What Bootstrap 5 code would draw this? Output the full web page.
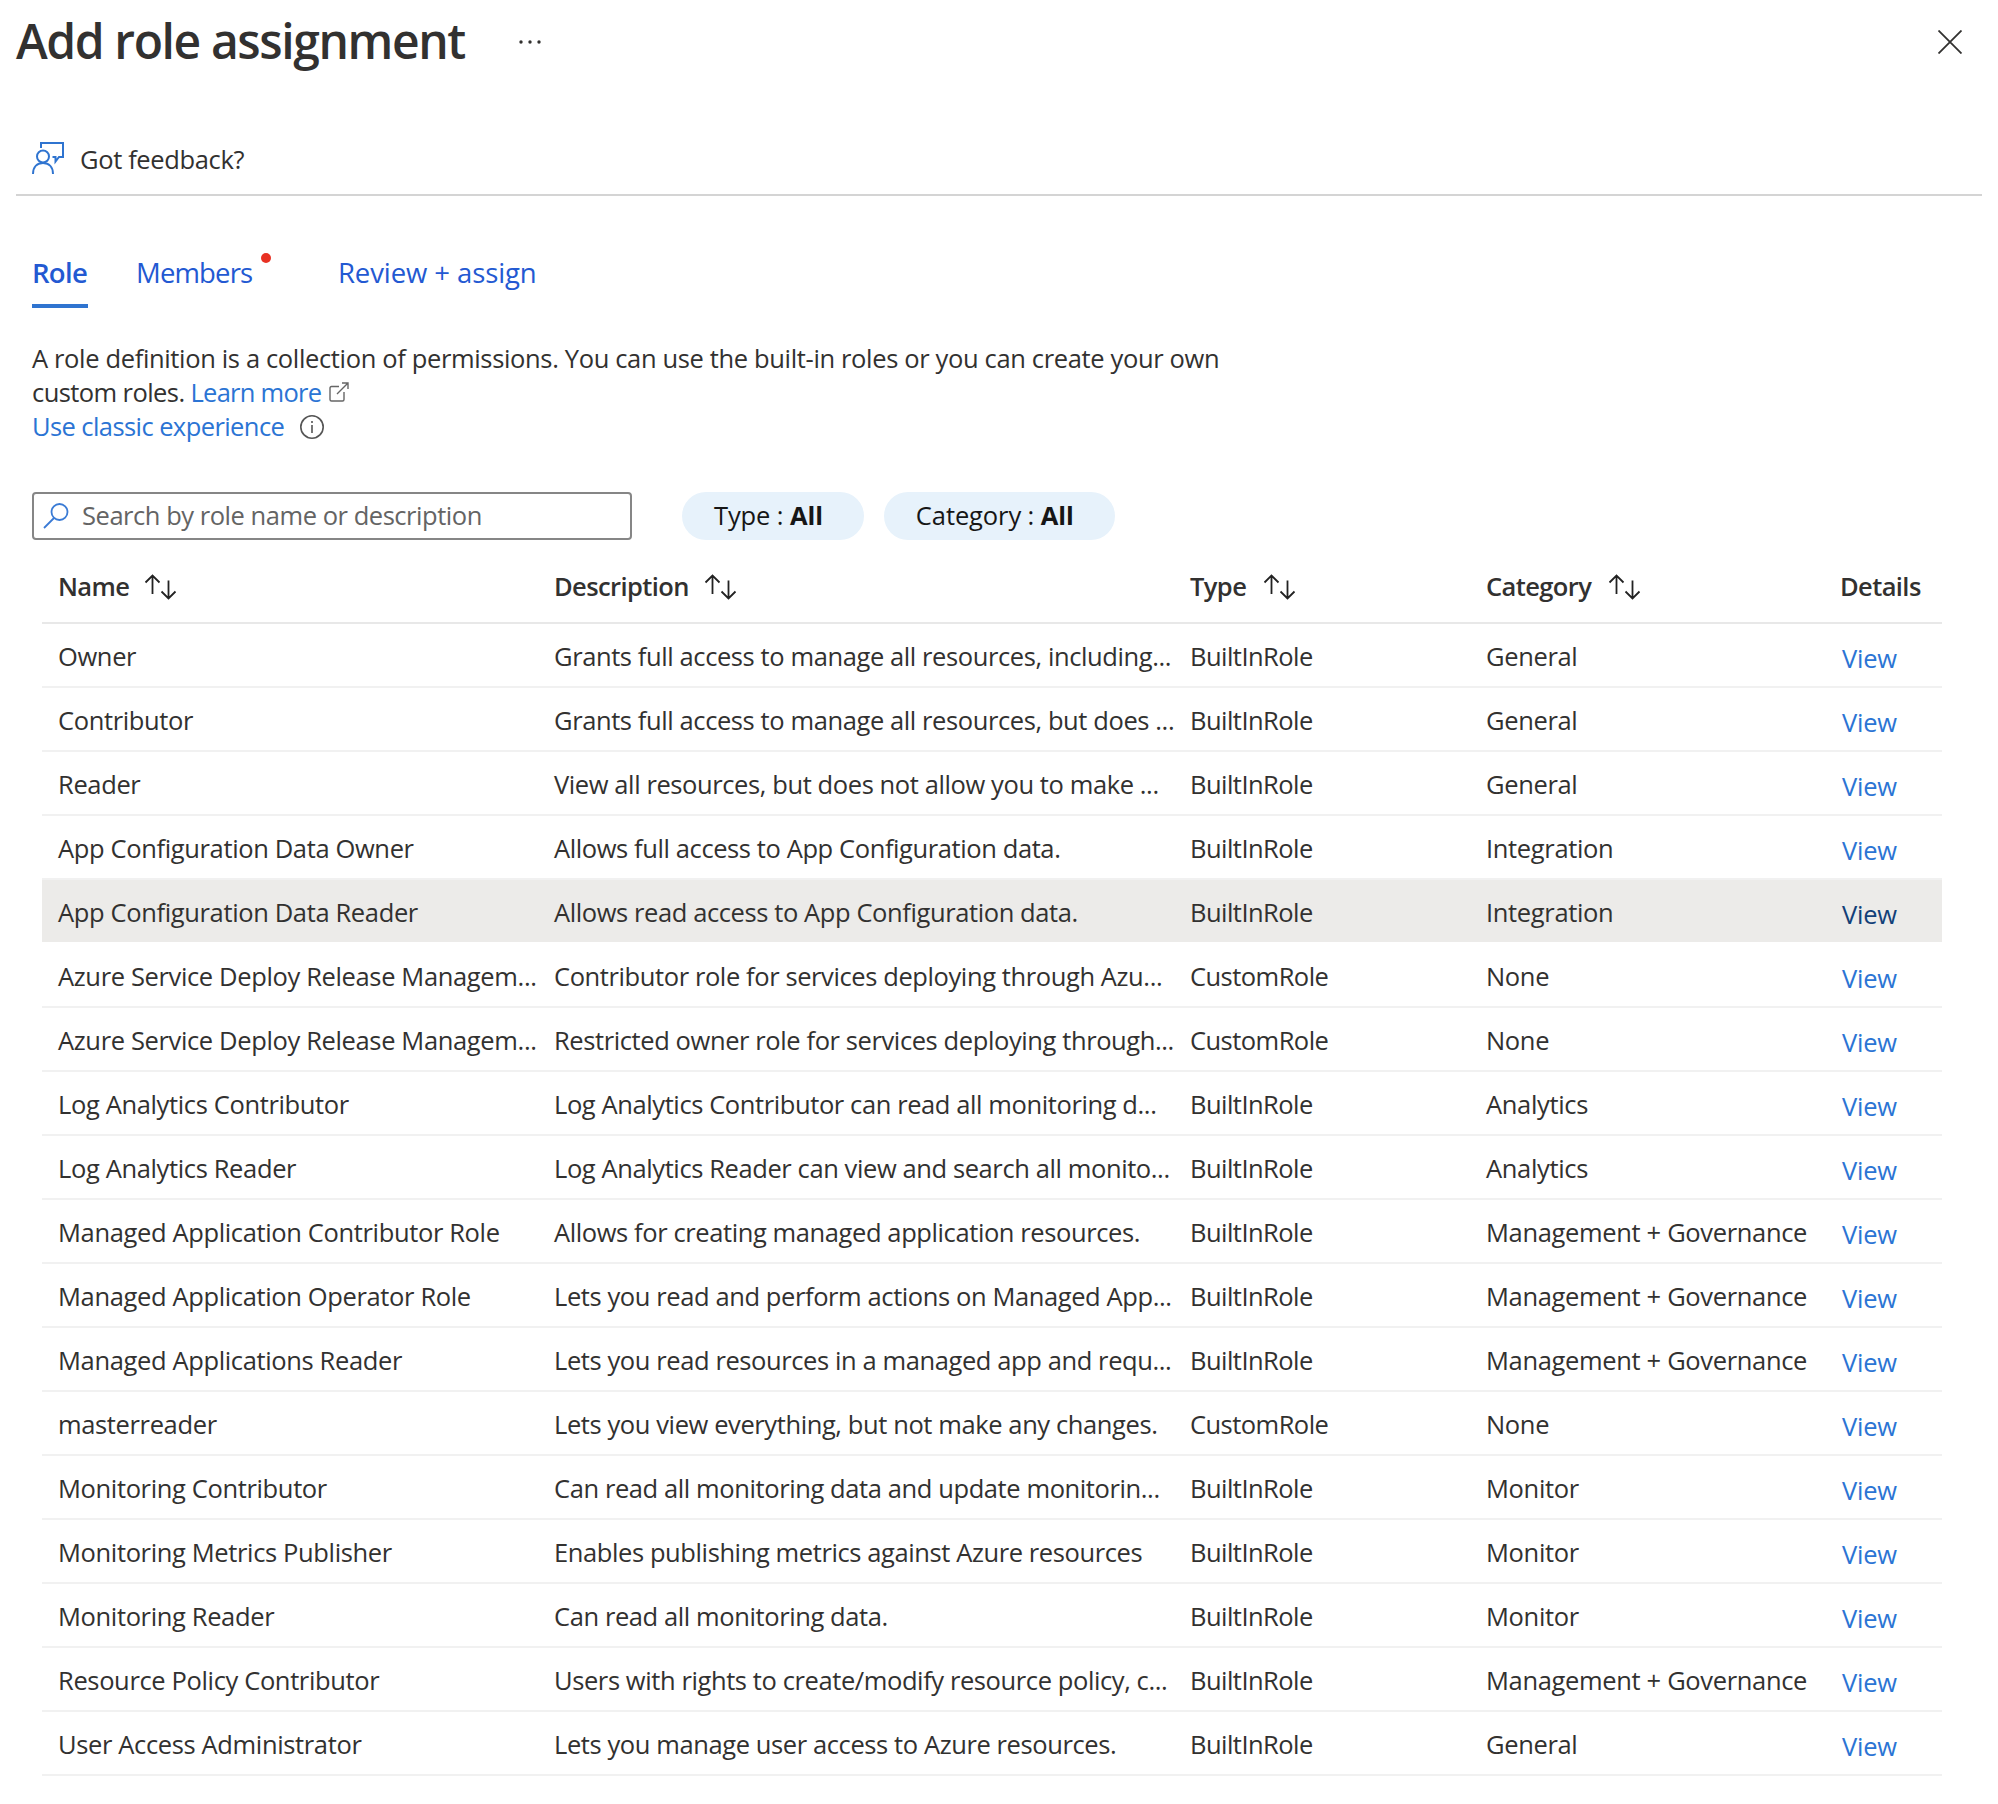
<!DOCTYPE html>
<html lang="en">
<head>
<meta charset="utf-8">
<meta name="viewport" content="width=device-width, initial-scale=1">
<title>Add role assignment</title>
<link href="https://cdn.jsdelivr.net/npm/bootstrap@5.3.0/dist/css/bootstrap.min.css" rel="stylesheet">
<style>
  body { font-family: "Open Sans", "Noto Sans", sans-serif; font-size: 25.5px; line-height: 34px; letter-spacing: -.36px; color: #323130; background: #fff; overflow-x: hidden; }
  svg { display: block; flex: none; fill: none; }
  a { color: #2b74d4; text-decoration: none; }
  .blade-head { height: 84px; padding: 0 36px 0 16px; }
  .blade-title { font-size: 48px; line-height: 64px; font-weight: 600; letter-spacing: -1.4px; width: 503px; padding-bottom: 2px; white-space: nowrap; }
  .cmd-bar { height: 112px; margin: 0 16px; padding: 49px 16px 0; border-bottom: 2px solid #d4d4d4; }
  .cmd-text { padding-top: 9px; letter-spacing: -.36px; }
  .role-tabs { padding: 58px 32px 0; font-size: 27.5px; letter-spacing: -.1px; }
  .role-tabs .nav-link { color: #2359d2; padding: 0 0 12px; line-height: 38px; border-bottom: 4px solid transparent; white-space: nowrap; }
  .role-tabs .nav-link.active { font-weight: 600; border-color: #2f74d0; width: 56px; letter-spacing: -.7px; }
  .tab-members { margin-left: 48px; width: 202px; }
  .tab-members .nav-link { letter-spacing: -.85px; }
  .alert-dot { width: 10px; height: 10px; border-radius: 50%; background: #e83123; position: absolute; left: 125px; top: -1px; }
  .intro { padding: 33px 32px 0; width: 1300px; letter-spacing: -.35px; }
  .intro-links { letter-spacing: -.58px; }
  .intro-links .link-more { letter-spacing: -.75px; }
  .info-mark { margin-top: 2px; }
  .filter-bar { padding: 49px 32px 0; }
  .search-box { width: 600px; height: 48px; border: 2px solid #868686; border-radius: 4px; padding: 0 9px; color: #646464; margin-right: 50px; letter-spacing: -.46px; }
  .search-box svg { margin-right: 13px; }
  .search-box span { padding-bottom: 2px; }
  .filter-pill { height: 48px; border-radius: 24px; background: #e7f2fb; color: #161616; padding: 0 41px 2px 32px; margin-right: 20px; white-space: nowrap; letter-spacing: -.1px; }
  .filter-pill b { font-weight: 700; }
  .role-grid { width: 1900px; margin: 12px 0 0 42px; table-layout: fixed; border-collapse: separate; border-spacing: 0; }
  .role-grid th, .role-grid td { vertical-align: top; white-space: nowrap; padding: 15px 0 13px 16px; border-bottom: 2px solid #f1f1f1; }
  .role-grid th { font-weight: 600; padding: 17px 0 19px 16px; border-color: #e8e8e8; letter-spacing: -.6px; }
  .role-grid th svg { margin: 2px 0 0 15px; }
  .role-grid th:nth-child(n+3) svg { margin-left: 17px; }
  .role-grid td:nth-child(2) { letter-spacing: -.4px; }
  .role-grid td:nth-child(3) { letter-spacing: -.54px; }
  .role-grid td:nth-child(4) { letter-spacing: -.34px; }
  .role-grid td:last-child { padding: 17px 0 11px 18px; letter-spacing: -.2px; }
  .picked td { background: #ecebe9; background-clip: padding-box; border-color: #fff; }
  .picked a { color: #124078; }
</style>
</head>
<body>
<header class="blade-head d-flex align-items-center">
  <h1 class="blade-title m-0">Add role assignment</h1>
  <svg width="22" height="6" viewBox="0 0 22 6"><g fill="#323130"><circle cx="2" cy="3" r="1.7"/><circle cx="11" cy="3" r="1.7"/><circle cx="20" cy="3" r="1.7"/></g></svg>
  <svg class="ms-auto" width="24" height="24" viewBox="0 0 24 24" stroke="#323130" stroke-width="1.8"><path d="M.5.5l23 23M23.500.5l-23 23"/></svg>
</header>
<div class="cmd-bar d-flex">
  <svg class="mt-2 me-3" width="32" height="34" viewBox="0 0 32 34" stroke="#2f74d0" stroke-width="2"><path d="M9 7V2h22v14h-4l-3.500 4.500V16H20.500"/><circle cx="11" cy="15.500" r="6"/><path d="M1 33c0-7 4-11 10-11s10 4 10 11"/></svg>
  <span class="cmd-text">Got feedback?</span>
</div>
<ul class="nav role-tabs">
  <li class="nav-item"><a class="nav-link active" href="#">Role</a></li>
  <li class="nav-item tab-members position-relative"><a class="nav-link" href="#">Members</a><span class="alert-dot"></span></li>
  <li class="nav-item"><a class="nav-link" href="#">Review + assign</a></li>
</ul>
<div class="intro">
  <div>A role definition is a collection of permissions. You can use the built-in roles or you can create your own</div>
  <div class="intro-links d-flex align-items-center"><span>custom roles.&nbsp;</span><a class="link-more" href="#">Learn more</a>
    <svg class="ms-2" width="20" height="20" viewBox="0 0 20 20" stroke="#666" stroke-width="1.400"><path d="M10 4.500H2.500Q1 4.500 1 6v11.500Q1 19 2.500 19h11q1.500 0 1.500-1.500V10M13 1h6v6M19 1L8 12"/></svg></div>
  <div class="intro-links d-flex align-items-center"><a href="#">Use classic experience</a>
    <svg class="ms-3 info-mark" width="24" height="24" viewBox="0 0 24 24" stroke="#555" stroke-width="1.600"><circle cx="12" cy="12" r="11.200"/><path d="M12 10v8M12 6v2"/></svg></div>
</div>
<div class="filter-bar d-flex">
  <div class="search-box d-flex align-items-center">
    <svg width="26" height="26" viewBox="0 0 26 26" stroke="#3a7bd5" stroke-width="1.800"><circle cx="16.500" cy="9" r="8"/><path d="M11 15L1 25"/></svg>
    <span>Search by role name or description</span>
  </div>
  <div class="filter-pill d-flex align-items-center">Type :&nbsp;<b>All</b></div>
  <div class="filter-pill d-flex align-items-center">Category :&nbsp;<b>All</b></div>
</div>
<svg width="0" height="0" class="position-absolute"><symbol id="sort" viewBox="0 0 34 26"><path d="M8.500 20V1.500M1.500 8.500l7-7 7 7M24.500 6.500v18M17.500 17.500l7 7 7-7" stroke="#222" stroke-width="1.800" fill="none"/></symbol></svg>
<table class="role-grid">
  <colgroup><col style="width:496px"><col style="width:636px"><col style="width:296px"><col style="width:354px"><col style="width:118px"></colgroup>
  <thead><tr>
    <th><div class="d-flex align-items-center">Name<svg width="34" height="26"><use href="#sort"/></svg></div></th>
    <th><div class="d-flex align-items-center">Description<svg width="34" height="26"><use href="#sort"/></svg></div></th>
    <th><div class="d-flex align-items-center">Type<svg width="34" height="26"><use href="#sort"/></svg></div></th>
    <th><div class="d-flex align-items-center">Category<svg width="34" height="26"><use href="#sort"/></svg></div></th>
    <th>Details</th>
  </tr></thead>
  <tbody>
    <tr><td>Owner</td><td>Grants full access to manage all resources, including...</td><td>BuiltInRole</td><td>General</td><td><a href="#">View</a></td></tr>
    <tr><td>Contributor</td><td>Grants full access to manage all resources, but does ...</td><td>BuiltInRole</td><td>General</td><td><a href="#">View</a></td></tr>
    <tr><td>Reader</td><td>View all resources, but does not allow you to make ...</td><td>BuiltInRole</td><td>General</td><td><a href="#">View</a></td></tr>
    <tr><td>App Configuration Data Owner</td><td>Allows full access to App Configuration data.</td><td>BuiltInRole</td><td>Integration</td><td><a href="#">View</a></td></tr>
    <tr class="picked"><td>App Configuration Data Reader</td><td>Allows read access to App Configuration data.</td><td>BuiltInRole</td><td>Integration</td><td><a href="#">View</a></td></tr>
    <tr><td>Azure Service Deploy Release Managem...</td><td>Contributor role for services deploying through Azu...</td><td>CustomRole</td><td>None</td><td><a href="#">View</a></td></tr>
    <tr><td>Azure Service Deploy Release Managem...</td><td>Restricted owner role for services deploying through...</td><td>CustomRole</td><td>None</td><td><a href="#">View</a></td></tr>
    <tr><td>Log Analytics Contributor</td><td>Log Analytics Contributor can read all monitoring d...</td><td>BuiltInRole</td><td>Analytics</td><td><a href="#">View</a></td></tr>
    <tr><td>Log Analytics Reader</td><td>Log Analytics Reader can view and search all monito...</td><td>BuiltInRole</td><td>Analytics</td><td><a href="#">View</a></td></tr>
    <tr><td>Managed Application Contributor Role</td><td>Allows for creating managed application resources.</td><td>BuiltInRole</td><td>Management + Governance</td><td><a href="#">View</a></td></tr>
    <tr><td>Managed Application Operator Role</td><td>Lets you read and perform actions on Managed App...</td><td>BuiltInRole</td><td>Management + Governance</td><td><a href="#">View</a></td></tr>
    <tr><td>Managed Applications Reader</td><td>Lets you read resources in a managed app and requ...</td><td>BuiltInRole</td><td>Management + Governance</td><td><a href="#">View</a></td></tr>
    <tr><td>masterreader</td><td>Lets you view everything, but not make any changes.</td><td>CustomRole</td><td>None</td><td><a href="#">View</a></td></tr>
    <tr><td>Monitoring Contributor</td><td>Can read all monitoring data and update monitorin...</td><td>BuiltInRole</td><td>Monitor</td><td><a href="#">View</a></td></tr>
    <tr><td>Monitoring Metrics Publisher</td><td>Enables publishing metrics against Azure resources</td><td>BuiltInRole</td><td>Monitor</td><td><a href="#">View</a></td></tr>
    <tr><td>Monitoring Reader</td><td>Can read all monitoring data.</td><td>BuiltInRole</td><td>Monitor</td><td><a href="#">View</a></td></tr>
    <tr><td>Resource Policy Contributor</td><td>Users with rights to create/modify resource policy, c...</td><td>BuiltInRole</td><td>Management + Governance</td><td><a href="#">View</a></td></tr>
    <tr><td>User Access Administrator</td><td>Lets you manage user access to Azure resources.</td><td>BuiltInRole</td><td>General</td><td><a href="#">View</a></td></tr>
  </tbody>
</table>
<script src="https://cdn.jsdelivr.net/npm/bootstrap@5.3.0/dist/js/bootstrap.bundle.min.js"></script>
</body>
</html>
